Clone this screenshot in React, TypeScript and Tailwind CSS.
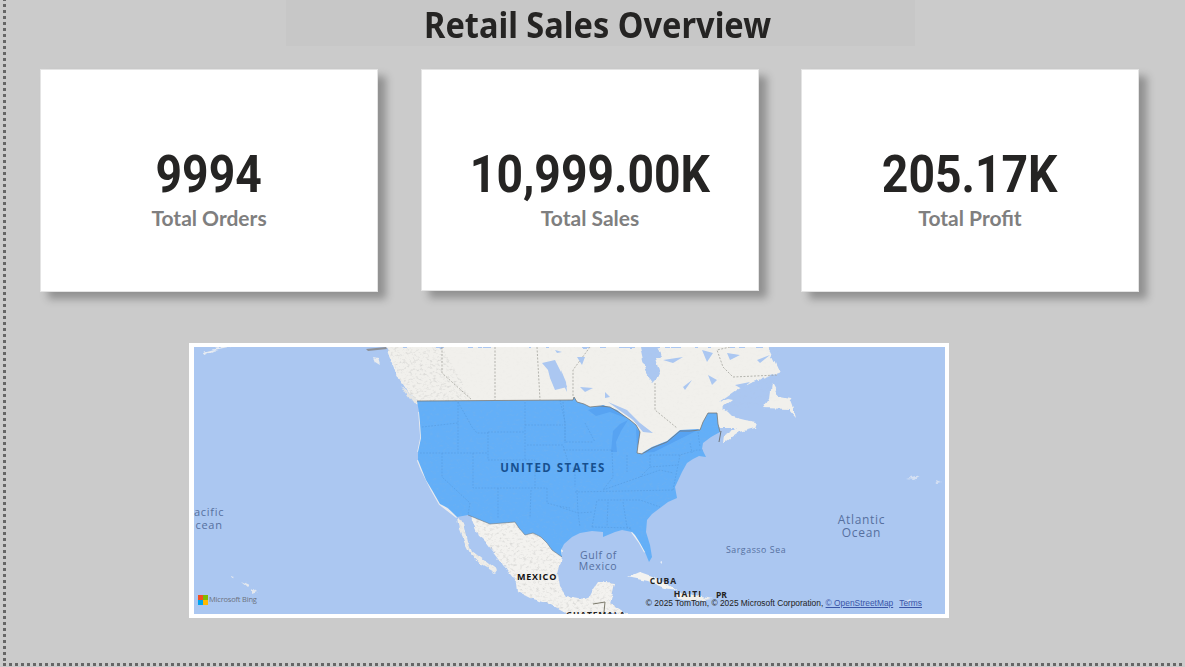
import React from "react";

const usPath =
  "M417 401 L573 400 L574 397 L577 402 L584 404 L590 407 L600 406 L610 407 L620 413 L630 420 L636 425 L640 432 L638 445 L637 453 L642 454 L652 448 L667 442 L680 431 L690 431 L700 430 L703 422 L708 413 L717 413 L718 424 L720 432 L711 437 L703 443 L702 449 L706 457 L699 456 L693 459 L687 463 L682 472 L675 487 L677 498 L668 502 L660 508 L652 514 L647 520 L646 532 L650 545 L652 557 L649 562 L645 552 L640 543 L635 535 L632 532 L622 530 L615 532 L603 537 L603 532 L592 531 L580 533 L572 537 L564 544 L561 550 L562 557 L552 550 L547 543 L541 537 L533 533 L525 535 L519 528 L515 522 L503 523 L490 524 L468 515 L457 517 L448 508 L440 504 L436 497 L432 490 L426 480 L422 470 L418 460 L418 452 L421 438 L420 423 L419 412 Z";
const canadaPath =
  "M386 347 L389 356 L394 368 L400 380 L407 391 L414 397 L416 404 L500 420 L640 435 L636 456 L660 450 L700 436 L716 420 L720 428 L737 428 L725 435 L724 443 L740 432 L755 428 L757 422 L745 420 L733 417 L727 411 L723 408 L733 400 L728 399 L720 402 L737 390 L750 383 L765 378 L780 373 L775 362 L770 352 L767 347 L657 347 L662 357 L655 357 L660 375 L653 382 L645 370 L640 347 Z";
const mexicoPath =
  "M470 505 L560 520 L562 557 L558 573 L560 587 L566 596 L578 598 L585 599 L590 597 L594 589 L598 583 L607 582 L615 583 L613 592 L610 603 L618 608 L627 614 L568 614 L550 604 L530 598 L518 592 L517 583 L507 570 L495 554 L484 540 L478 535 L472 520 Z";
const bajaPath = "M458 517 L464 523 L468 541 L472 551 L485 561 L497 570 L495 573 L481 565 L470 553 L465 543 L460 530 Z";

const stateLines = [
  "M458 402 L458 452 M422 427 L458 423 M420 453 L488 453 M458 402 L472 427 L477 433 L488 433",
  "M488 432 L525 432 M488 432 L488 460 L525 460 M525 402 L525 460 M442 453 L442 477 L470 503 L468 515",
  "M473 453 L473 488 L547 488 M498 488 L498 518 M531 490 L530 518 M527 445 L563 445 L568 462",
  "M525 425 L563 425 M563 402 L565 425 L565 443 M525 460 L535 460 L535 488 M547 488 L547 503 L558 506 L570 508",
  "M560 400 L565 422 L565 442 L593 442 M585 423 L595 442 M563 450 L612 450 M566 468 L575 468 L596 468 M575 468 L575 487",
  "M612 450 L613 477 L603 490 L640 477 L660 470 L673 473 M627 455 L627 472 M650 455 L650 467 L640 477",
  "M575 492 L673 490 M598 500 L620 500 L640 500 L660 507 M592 527 L597 500 M608 502 L607 527 M623 502 L627 527 L632 530",
  "M560 507 L578 513 L593 512 M577 490 L578 513 L580 527 M592 527 L632 528",
  "M650 455 L680 455 L697 450 L703 450 M650 467 L678 465 M673 490 L678 465 L680 455 M690 443 L692 453 M698 432 L700 447",
];

const lakes = [
  "M542 363 L555 360 L561 372 L567 387 L555 390 L550 378 L548 370 Z",
  "M555 350 L562 352 L557 353 Z",
  "M577 357 L585 357 L582 365 Z",
  "M561 370 L566 382 L567 392 L562 382 Z",
  "M663 360 L683 357 L673 363 Z",
  "M702 350 L713 353 L707 362 Z",
  "M727 353 L740 355 L730 360 Z",
  "M757 360 L770 355 L760 363 Z",
  "M708 375 L717 380 L712 385 Z",
  "M683 387 L692 380 L685 390 Z",
  "M580 387 L593 388 L585 392 Z",
  "M605 392 L610 397 L605 398 Z",
  "M608 402 L627 410 L640 423 L653 433 L643 432 L633 420 Z",
  "M735 385 L750 382 L742 389 Z",
];

function Land() {
  return (
    <svg className="block h-full w-full" viewBox="194 347 751 267" preserveAspectRatio="none" aria-hidden>
      <defs>
        <filter id="terrain" x="0" y="0" width="100%" height="100%">
          <feTurbulence type="fractalNoise" baseFrequency="0.3 0.42" numOctaves="3" seed="7" result="n" />
          <feColorMatrix in="n" type="matrix" values="0 0 0 0 0.5  0 0 0 0 0.5  0 0 0 0 0.49  2.4 0 0 0 -1.2" result="c" />
          <feGaussianBlur in="c" stdDeviation="0.5" result="b" />
          <feComposite in="b" in2="SourceAlpha" operator="in" />
        </filter>
        <filter id="coast" x="-3%" y="-3%" width="106%" height="106%">
          <feTurbulence type="fractalNoise" baseFrequency="0.11" numOctaves="3" seed="11" result="w" />
          <feDisplacementMap in="SourceGraphic" in2="w" scale="5" xChannelSelector="R" yChannelSelector="G" result="d" />
          <feGaussianBlur in="d" stdDeviation="0.45" />
        </filter>
        <filter id="soft" x="-5%" y="-5%" width="110%" height="110%">
          <feGaussianBlur stdDeviation="0.35" />
        </filter>
      </defs>
      <rect x="194" y="347" width="751" height="267" fill="#abc7f1" />

      <g filter="url(#coast)">
        <path d={canadaPath} fill="#f1f0ec" />
        <path d="M373 357 L378 358 L380 365 L375 362 Z" fill="#e8ebef" />
        <path d="M400 385 L415 398 L424 406 L412 402 Z" fill="#e6e6e3" />
        <path d="M772 383 L779 396 L790 398 L793 406 L796 417 L789 409 L763 408 L770 398 Z" fill="#f1f0ec" />
        <path d={mexicoPath} fill="#f3f2ef" />
        <path d={bajaPath} fill="#eeede9" />
        <path d="M628 577 L640 572 L654 577 L667 584 L677 590 L664 588 L648 581 Z" fill="#f3f3f1" />
        <path d="M675 594 L690 593 L703 597 L712 599 L695 601 L678 599 Z" fill="#f1f0ec" />
        <path d="M203 352 L222 347 L232 347 L213 351 L204 355 Z" fill="#e8ecf2" />
        <path d="M231 577 L235 578 L232 580 Z M241 581 L250 585 L248 587 Z M252 588 L257 592 L252 594 Z" fill="#e4e8ee" />
        <path d="M904 601 L912 599 L910 603 Z M907 479 L920 476 L914 480 Z M936 480 L941 482 L937 483 Z" fill="#d6e1f3" />
        <path d="M660 562 L662 561 L662 564 Z" fill="#e6edf8" />
      </g>

      <path d="M366 349 L386 347 L387 349 L368 351 Z" fill="#8d9198" />
      <path d="M387 347 L442 347 L472 400 L416 404 L400 380 Z" filter="url(#terrain)" opacity="0.5" />
      <path d={mexicoPath} filter="url(#terrain)" opacity="0.5" />
      <path d={bajaPath} filter="url(#terrain)" opacity="0.35" />
      <path d="M442 347 L780 347 L780 400 L700 420 L640 450 L472 400 Z" filter="url(#terrain)" opacity="0.05" />

      <g fill="none" stroke="#9a9992" strokeWidth="0.7" strokeDasharray="2 1.5">
        <path d="M442 347 L442 373 L472 400 M495 347 L495 400 M537 347 L540 400 M590 347 L573 370 L573 397" />
        <path d="M655 383 L655 410 L677 428 M730 347 L717 350 L723 367 L733 377 L777 375" />
      </g>

      <g fill="#abc7f1" filter="url(#soft)">
        {lakes.map((d) => (
          <path key={d} d={d} />
        ))}
      </g>

      <path d="M418 460 L422 470 L432 490 L440 504 L457 517" fill="none" stroke="#e9ebef" strokeWidth="2.4" />
      <path d="M419 412 L421 438 L418 452" fill="none" stroke="#e9ebef" strokeWidth="1.6" />
      <path d="M632 532 L640 543 L645 552" fill="none" stroke="#eef0f2" strokeWidth="2" />
      <path d={usPath} fill="#63aff8" />
      <path d={usPath} filter="url(#terrain)" opacity="0.1" />
      <path d="M588 410 L603 405 L617 410 L626 418 L610 412 L596 416 Z" fill="#57a3f2" />
      <path d="M611 452 L613 431 L620 424 L628 420 L621 431 L616 442 L617 452 Z" fill="#57a3f2" />
      <path d="M636 428 L640 432 L637 448 Z" fill="#57a3f2" />
      <path d="M642 453 L652 447 L667 441 L680 430 L700 429 L690 434 L668 445 L654 452 Z" fill="#57a3f2" />
      <g fill="none" stroke="#4a8ccc" strokeWidth="0.6" strokeDasharray="1.7 1.4" opacity="0.6">
        {stateLines.map((d) => (
          <path key={d} d={d} />
        ))}
      </g>
      <path d="M417 401 L573 400 L574 397 L577 402 L584 404 L590 407 L600 406 L610 407 L620 413 L630 420 L636 425 L640 432 L638 445 L637 453 L642 454 L652 448 L667 442 L680 431 L690 431 L700 430 L703 422 L708 413 L717 413 L718 424 L720 432" fill="none" stroke="#77746e" strokeWidth="1" opacity="0.75" />
      <path d="M721 431 L719 442" fill="none" stroke="#6f7479" strokeWidth="1" />
      <path d="M562 557 L552 550 L547 543 L541 537 L533 533 L525 535 L519 528 L515 522 L503 523 L490 524 L468 515" fill="none" stroke="#6f7479" strokeWidth="0.8" opacity="0.7" />
      <path d="M593 604 L605 602 L604 612" fill="none" stroke="#7c7a6c" strokeWidth="1" />

      <g fontFamily="'Open Sans', sans-serif">
        <text x="553" y="472" textAnchor="middle" fontSize="11.5" fontWeight="700" letterSpacing="1.45" fill="#17508f">UNITED STATES</text>
        <text x="537" y="580" textAnchor="middle" fontSize="9" fontWeight="700" letterSpacing="0.8" fill="#111">MEXICO</text>
        <text x="663.5" y="584" textAnchor="middle" fontSize="8.5" fontWeight="700" letterSpacing="1" fill="#222">CUBA</text>
        <text x="688" y="597" textAnchor="middle" fontSize="8.5" fontWeight="700" letterSpacing="1.1" fill="#222">HAITI</text>
        <text x="721.5" y="598" textAnchor="middle" fontSize="8.5" fontWeight="700" fill="#222">PR</text>
        <text x="596" y="618" textAnchor="middle" fontSize="8.5" fontWeight="700" letterSpacing="0.8" fill="#222">GUATEMALA</text>
        <text x="598.5" y="559" textAnchor="middle" fontSize="10.5" letterSpacing="0.6" fill="#56709f">Gulf of</text>
        <text x="598" y="570" textAnchor="middle" fontSize="10.5" letterSpacing="0.6" fill="#56709f">Mexico</text>
        <text x="756" y="553" textAnchor="middle" fontSize="8.8" letterSpacing="0.55" fill="#56709f">Sargasso Sea</text>
        <text x="861.5" y="523.5" textAnchor="middle" fontSize="12" letterSpacing="0.7" fill="#56709f">Atlantic</text>
        <text x="861.5" y="536.5" textAnchor="middle" fontSize="12" letterSpacing="0.7" fill="#56709f">Ocean</text>
        <text x="194" y="516" fontSize="11" letterSpacing="0.7" fill="#56709f">acific</text>
        <text x="195.5" y="529" fontSize="11" letterSpacing="0.7" fill="#56709f">cean</text>
      </g>
    </svg>
  );
}

function Kpi({ value, label, cls }: { value: string; label: string; cls: string }) {
  return (
    <div className={`flex w-[338px] flex-col items-center border border-[#e4e4e4] bg-white pt-[75px] shadow-[8px_7px_8px_rgba(0,0,0,0.29)] ${cls}`}>
      <div className="origin-center scale-x-[0.89] whitespace-nowrap font-['Roboto',sans-serif] text-[52px] leading-[60px] font-bold text-[#252423]">
        {value}
      </div>
      <div className="font-['Lato',sans-serif] text-[21px] leading-[26px] font-bold text-[#7f7f7f]">{label}</div>
    </div>
  );
}

export default function App() {
  return (
    <div className="h-[667px] w-[1185px] overflow-hidden bg-[#cbcbcb] bg-[repeating-linear-gradient(to_bottom,#666666_0_1px,transparent_1px_4px,#666666_4px_6px),repeating-linear-gradient(to_right,#666666_0_3px,transparent_3px_6px)] bg-[size:3px_664px,1182px_3px] bg-[position:3px_0,3px_663px] bg-no-repeat">
      <header className="ml-[286px] flex h-[46px] w-[629px] items-center justify-center bg-[#c7c7c7] pt-[3px] pr-[5px] font-['Noto_Sans',sans-serif] text-[35px] leading-none font-bold text-[#252423]">
        <span className="scale-x-[0.93] whitespace-nowrap">Retail Sales Overview</span>
      </header>
      <section className="mt-[23px] ml-[40px] flex items-start gap-[43px]">
        <Kpi value="9994" label="Total Orders" cls="h-[223px]" />
        <Kpi value="10,999.00K" label="Total Sales" cls="h-[222px]" />
        <Kpi value="205.17K" label="Total Profit" cls="-ml-[1px] h-[223px]" />
      </section>
      <section className="relative mt-[51px] ml-[189px] h-[275px] w-[760px] border-4 border-l-[5px] border-white">
        <Land />
        <div className="absolute bottom-[9px] left-[4px] flex items-center gap-px font-['Open_Sans',sans-serif] text-[7.5px] leading-none tracking-[-0.2px] text-[#6b7280]">
          <div className="grid h-[10px] w-[10px] shrink-0 grid-cols-2 grid-rows-2">
            <span className="bg-[#f25022]" />
            <span className="bg-[#7fba00]" />
            <span className="bg-[#00a4ef]" />
            <span className="bg-[#ffb900]" />
          </div>
          <span>Microsoft Bing</span>
        </div>
        <div className="absolute right-[23px] bottom-[6px] flex gap-[6px] font-['Liberation_Sans',sans-serif] text-[8.4px] leading-[10px] whitespace-nowrap text-[#222222]">
          <span>
            © 2025 TomTom, © 2025 Microsoft Corporation, <span className="text-[#3a55a8] underline">© OpenStreetMap</span>
          </span>
          <span className="text-[#3a55a8] underline">Terms</span>
        </div>
      </section>
    </div>
  );
}
